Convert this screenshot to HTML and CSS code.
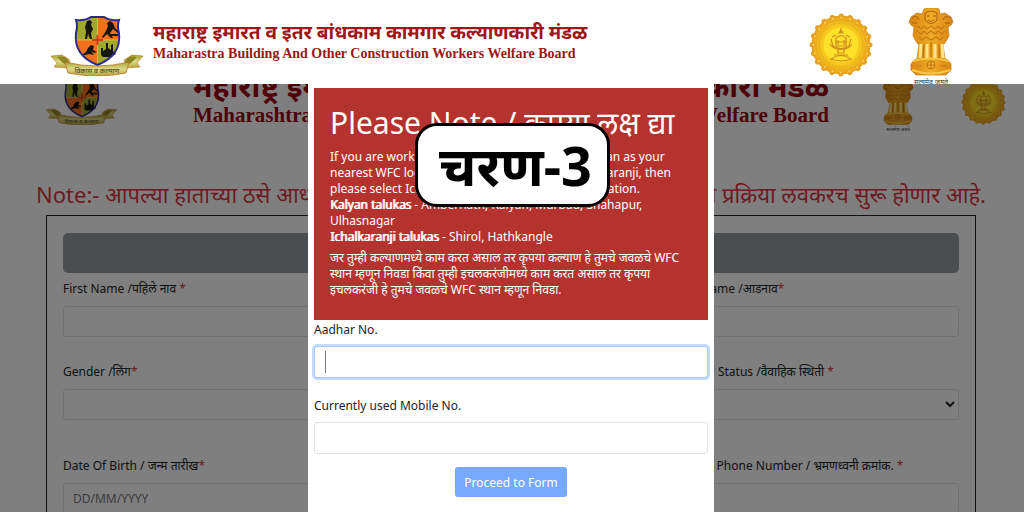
FILE: index.html
```html
<!DOCTYPE html>
<html lang="mr">
<head>
<meta charset="utf-8">
<meta name="viewport" content="width=device-width, initial-scale=1">
<title>Maharastra Building And Other Construction Workers Welfare Board</title>
<link rel="stylesheet" href="styles.css">
</head>
<body>
<svg class="defs" aria-hidden="true">
  <defs>
    <radialGradient id="gold"><stop offset="0" stop-color="#ffe424"/><stop offset=".6" stop-color="#fbd01c"/><stop offset="1" stop-color="#eda71c"/></radialGradient>
    <linearGradient id="ribbon" x2="0" y2="1"><stop offset="0" stop-color="#a9a52c"/><stop offset=".5" stop-color="#dcd88a"/><stop offset="1" stop-color="#b2a636"/></linearGradient>
    <linearGradient id="bronze"><stop offset="0" stop-color="#d98212"/><stop offset=".5" stop-color="#f0ab26"/><stop offset="1" stop-color="#d98212"/></linearGradient>
    <clipPath id="shieldclip"><path d="M26 4Q35 5 41 0H54Q60 5 69 4Q67 10 69 17C71 34 62 43 47.500 49C33 43 24 34 26 17Q28 10 26 4Z"/></clipPath>
  </defs>
  <symbol id="crest" viewBox="0 0 94 60">
    <g clip-path="url(#shieldclip)">
      <path fill="#a0a82e" d="M20 0h28v24H20zM48 24h28v27H48z"/>
      <path fill="#f2701c" d="M48 0h28v24H48zM20 24h28v27H20z"/>
    </g>
    <path d="M47.500 1V47M25 24H70" stroke="#dfc25a" stroke-width=".8"/>
    <path d="M47.500 19v10M42 24h11" stroke="#d63c16" stroke-width="2"/>
    <path fill="#15160d" d="M37 5l3-1 2 2-1 3 2 4-2 4 1 6h-2l-2-5-1 5h-2l1-7-1-5zM52 21l4-6 2-5-1-3 3-2 3 2 2 5 4 4-1 1-5-4-3 4 3 5h-2l-4-4-4 4zM61 18h7v2h-7zM32 39l4-3 2-4 3-3 3 1-1 4 4 2-3 1-3-2 3 4-5-1-7 2zM51 39v-7h2v3l3-2v-6h2v5l3 2v-5l2-1v7l3 3-5 3H53z"/>
    <path d="M26 4Q35 5 41 1H54Q60 5 69 4Q67 10 69 17C71 34 62 43 47.500 49C33 43 24 34 26 17Q28 10 26 4Z" fill="none" stroke="#292a8c" stroke-width="2"/>
    <path fill="url(#ribbon)" stroke="#bd7425" stroke-width=".6" d="M1 40l11-1 8 5-2 8-14-1 3-4zM93 40l-11-1-8 5 2 8 14-1-3-4z"/>
    <path fill="#8c8423" d="M7 41q12-3 13 9l-7-3zM87 41q-12-3-13 9l7-3z"/>
    <path fill="url(#ribbon)" stroke="#bd6b25" stroke-width=".8" d="M15 46Q47 54 79 46L76 57Q47 63 18 57Z"/>
    <text x="47" y="57" text-anchor="middle" class="crest-text">विकास व कल्याण</text>
  </symbol>
  <symbol id="seal" viewBox="0 0 64 64">
    <circle cx="32" cy="32" r="28.500" fill="url(#gold)" stroke="#e8a21d" stroke-width="2"/>
    <circle cx="32" cy="32" r="29" fill="none" stroke="#e3a224" stroke-width="5" stroke-linecap="round" stroke-dasharray="0.100 9.010"/>
    <circle cx="32" cy="32" r="27.500" fill="none" stroke="#fbd35a" stroke-width="2" stroke-linecap="round" stroke-dasharray="0.100 8.540"/>
    <circle cx="32" cy="32" r="25" fill="none" stroke="#e5a61e" stroke-width=".8"/>
    <circle cx="32" cy="32" r="22" fill="none" stroke="#e2b522" stroke-width="2" stroke-dasharray="1.500 1"/>
    <circle cx="32" cy="32" r="18" fill="#ffe12a" stroke="#f3c41f" stroke-width=".8"/>
    <g fill="none" stroke="#cf8d20" stroke-width="1.200">
      <path d="M32 15v5M30 20h4l-2-3zM27 25q5-5 10 0v8H27zM22 26l2 7q8 5 16 0l2-7M21 31q4 6 11 5 7 1 11-5M29 27v5M35 27v5M29 36v4h6v-4M25 42h14M22 46q10-7 20 0-10 4-20 0Z"/>
      <path d="M27 22l-4 2M37 22l4 2M26 29h12"/>
    </g>
  </symbol>
  <symbol id="lions" viewBox="0 0 46 78">
    <path fill="url(#bronze)" stroke="#c27813" stroke-width=".7" d="M16 1l3-1h9l3 1 1 5 5-1 6 4 2 5-2 3-3 2 1 9-4 7-2 2 2 14 3 1 3 4v6l-5 5H8l-5-5v-6l3-4 3-1 2-14-2-2-4-7 1-9-3-2-2-3 2-5 6-4 5 1z"/>
    <path d="M13 36l-1 14M19 36v14M27 36v14M34 36l1 14" stroke="#ffe787" stroke-width="3"/>
    <path d="M16 36l-1 14M23 34v16M31 36v14" stroke="#b8700f" stroke-width="1.200"/>
    <path d="M17 5q6-4 12 0v7q-6 7-12 0zM19 8h3M25 8h3M20 12q3 3 6 0M4 10q5-4 7 2M42 10q-5-4-7 2M4 15h5M37 15h5" fill="none" stroke="#a8620f" stroke-width="1"/>
    <path d="M10 18l3 3 3-3 3 3 4-3 4 3 3-3 3 3 3-3M9 23l4 3 3-3 3 3 4-3 4 3 3-3 4 3 3-3M11 29l3 3 4-3 5 3 5-3 4 3 3-3" fill="none" stroke="#c37a12" stroke-width="1.200"/>
    <path d="M5 53q18-5 36 0M4 62q19 7 38 0" fill="none" stroke="#f8c840" stroke-width="2"/>
    <circle cx="23" cy="57" r="4" fill="#f0b02d" stroke="#c27813"/>
    <path d="M8 58h6M32 58h7M23 53v8M19 57h8" stroke="#c27813" stroke-width="1.200"/>
    <text x="23" y="76" text-anchor="middle" class="lions-text">सत्यमेव जयते</text>
  </symbol>
</svg>

<header class="topbar">
  <svg class="crest" role="img" aria-label="Board crest"><use href="#crest"/></svg>
  <div class="brand">
    <span class="brand-mr">महाराष्ट्र इमारत व इतर बांधकाम कामगार कल्याणकारी मंडळ</span>
    <span class="brand-en">Maharastra Building And Other Construction Workers Welfare Board</span>
  </div>
  <div class="emblems">
    <svg class="seal" role="img" aria-label="State seal"><use href="#seal"/></svg>
    <svg class="lions" role="img" aria-label="National emblem"><use href="#lions"/></svg>
  </div>
</header>

<main class="stage">
  <section class="page">
    <div class="banner">
      <svg class="crest crest-small" aria-hidden="true"><use href="#crest"/></svg>
      <div class="banner-title">
        <div class="split banner-mr"><span>महाराष्ट्र इमारत</span><span>कल्याणकारी मंडळ</span></div>
        <div class="split banner-en"><span>Maharashtra</span><span>Welfare Board</span></div>
      </div>
      <svg class="lions lions-small" aria-hidden="true"><use href="#lions"/></svg>
      <svg class="seal seal-small" aria-hidden="true"><use href="#seal"/></svg>
    </div>
    <p class="split notice"><span>Note:- आपल्या हाताच्या ठसे आधार</span><span>नोंदणी प्रक्रिया लवकरच सुरू होणार आहे.</span></p>
    <form class="form">
      <div class="form-head"></div>
      <div class="fields">
        <div class="field"><label for="first">First Name /पहिले नाव <b>*</b></label><input id="first" type="text"></div>
        <div class="field"><label for="last">Last Name /आडनाव<b>*</b></label><input id="last" type="text"></div>
        <div class="field field-select"><label for="gender">Gender /लिंग<b>*</b></label><select id="gender"><option></option></select></div>
        <div class="field field-select"><label for="marital">Marital Status /वैवाहिक स्थिती <b>*</b></label><select id="marital"><option></option></select></div>
        <div class="field"><label for="dob">Date Of Birth / जन्म तारीख<b>*</b></label><input id="dob" type="text" placeholder="DD/MM/YYYY"></div>
        <div class="field"><label for="phone">Mobile Phone Number / भ्रमणध्वनी क्रमांक. <b>*</b></label><input id="phone" type="text"></div>
      </div>
    </form>
  </section>

  <div class="overlay">
    <div class="dialog" role="dialog" aria-labelledby="dialog-title">
      <div class="alert">
        <h1 id="dialog-title">Please Note / कृपया लक्ष द्या</h1>
        <p>If you are working in Kalyan area then select Kalyan as your<br>nearest WFC location, if you are working in Ichalkaranji, then<br>please select Ichalkaranji as your nearest WFC location.<br><strong>Kalyan talukas</strong> - Ambernath, Kalyan, Murbad, Shahapur,<br>Ulhasnagar<br><strong>Ichalkaranji talukas</strong> - Shirol, Hathkangle</p>
        <p>जर तुम्ही कल्याणमध्ये काम करत असाल तर कृपया कल्याण हे तुमचे जवळचे WFC<br>स्थान म्हणून निवडा किंवा तुम्ही इचलकरंजीमध्ये काम करत असाल तर कृपया<br>इचलकरंजी हे तुमचे जवळचे WFC स्थान म्हणून निवडा.</p>
      </div>
      <form class="lookup">
        <label for="aadhar">Aadhar No.</label>
        <input class="active" id="aadhar" type="text">
        <label for="mobile">Currently used Mobile No.</label>
        <input id="mobile" type="text">
        <button type="button">Proceed to Form</button>
      </form>
      <div class="step">चरण-3</div>
    </div>
  </div>
</main>
</body>
</html>
```
FILE: styles.css
```css
* { box-sizing: border-box; }
body {
  margin: 0;
  height: 100vh;
  display: flex;
  flex-direction: column;
  overflow: hidden;
  background: #fff;
  color: #212529;
  font-family: "Noto Sans", "Noto Sans Devanagari", sans-serif;
  font-size: 12px;
}
input, select, button { font: inherit; }
.defs { position: absolute; width: 0; height: 0; }
.crest-text { font-size: 7px; fill: #4a3b10; }
.lions-text { font-size: 7px; fill: #333; }

.topbar {
  display: flex;
  align-items: center;
  flex: none;
  height: 84px;
  padding: 0 70px 0 50px;
  overflow: hidden;
}
.crest { flex: none; width: 94px; height: 60px; margin-top: 8px; }
.brand {
  display: flex;
  flex-direction: column;
  margin-left: 9px;
  color: #9c1717;
  font-weight: 700;
  white-space: nowrap;
}
.brand-mr { font-size: 19px; line-height: 24px; }
.brand-en { font-family: "Liberation Serif", serif; font-size: 14px; line-height: 20px; }
.emblems { display: flex; align-items: center; gap: 35px; margin-left: auto; }
.seal { flex: none; width: 64px; height: 64px; margin-top: 6px; }
.lions { flex: none; width: 46px; height: 78px; margin-top: 10px; }

.stage { position: relative; flex: 1; min-height: 0; overflow: hidden; }
.banner {
  display: flex;
  align-items: flex-end;
  height: 48px;
  padding: 0 18px 0 45px;
}
.crest-small { width: 73px; height: 46px; margin: 0 0 7px; }
.banner-title { flex: 1; margin: 0 53px 4px 75px; color: #9c0010; font-weight: 700; }
.split { display: flex; justify-content: space-between; white-space: nowrap; }
.banner-mr { font-size: 30px; line-height: 32px; }
.banner-en { font-family: "Liberation Serif", serif; font-size: 21px; line-height: 26px; }
.lions-small { width: 32px; height: 54px; margin: 0 47px 0 0; }
.seal-small { width: 45px; height: 45px; margin: 0 0 7px; }
.notice {
  margin: 0;
  padding: 44px 38px 0 36px;
  color: #dc3545;
  font-size: 22px;
  line-height: 36px;
}
.form {
  margin: 3px 48px 0 46px;
  padding: 17px 16px;
  border: 1px solid #222;
}
.form-head { height: 40px; border-radius: 5px; background: #959da2; }
.fields {
  display: grid;
  grid-template-columns: 284px 284px;
  justify-content: space-between;
  row-gap: 26px;
  padding-top: 7px;
}
.field { display: flex; flex-direction: column; gap: 8px; white-space: nowrap; }
.field-select { margin-bottom: 11px; }
.field label { line-height: 18px; }
.field b { color: #dc3545; font-weight: 400; }
.field input, .field select, .lookup input {
  width: 100%;
  height: 31px;
  padding: 0 9px;
  border: 1px solid #dee2e6;
  border-radius: 3px;
  background: #fff;
  color: #212529;
}
.field select { padding: 0; }
.field:nth-child(3) select { appearance: none; }

.overlay {
  position: absolute;
  inset: 0;
  display: flex;
  justify-content: center;
  padding-right: 2px;
  background: rgba(0, 0, 0, .5);
}
.dialog { position: relative; width: 406px; padding: 4px 6px; background: #fff; }
.alert { padding: 12px 16px 22px; background: #b5332e; color: #fff; white-space: nowrap; }
.alert h1 { margin: 0 0 3px; font-size: 30px; line-height: 46px; font-weight: 400; }
.alert p { margin: 0 0 5px; line-height: 16px; }
.alert p:last-child { margin: 0; }
.alert strong { font-weight: 400; text-shadow: 1px 0 currentColor; }
.lookup { display: flex; flex-direction: column; }
.lookup label { line-height: 20px; margin-bottom: 6px; }
.lookup input { height: 32px; margin-bottom: 18px; }
.lookup input.active {
  border-color: #a4caff;
  box-shadow: 0 0 0 2px #c2dbfe;
  background: linear-gradient(#777, #777) 10px 50% / 1px 22px no-repeat #fff;
}
.lookup input:last-of-type { margin-bottom: 13px; }
.lookup button {
  align-self: center;
  height: 30px;
  padding: 0 9px;
  border: 0;
  border-radius: 3px;
  background: #76a9ff;
  color: #fff;
}
.step {
  position: absolute;
  top: 39px;
  left: 107px;
  padding: 0 15px 0 21px;
  border: 3px solid #000;
  border-radius: 22px;
  background: #fff;
  color: #000;
  font-size: 54px;
  font-weight: 700;
  line-height: 78px;
  white-space: nowrap;
}
```
